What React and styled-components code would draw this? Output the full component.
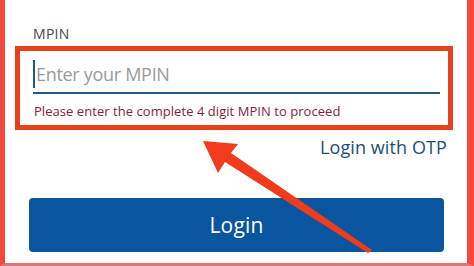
import React from 'react';
import styled, { createGlobalStyle } from 'styled-components';

const GlobalStyle = createGlobalStyle`
  html, body {
    margin: 0;
    padding: 0;
    background: #ffffff;
  }
  body {
    font-family: 'Open Sans', 'Liberation Sans', sans-serif;
  }
`;

const Screen = styled.div`
  position: relative;
  width: 474px;
  height: 266px;
  box-sizing: border-box;
  background: #ffffff;
  border-left: 5px solid #f4483a;
  border-right: 7px solid #f4483a;
  border-bottom: 3px solid #dc7677;
  overflow: hidden;
  display: flex;
  flex-direction: column;
`;

const Label = styled.div`
  margin: 25px 0 0 28px;
  font-size: 14px;
  line-height: 17px;
  color: #474747;
  letter-spacing: 0.3px;
`;

const Highlight = styled.div`
  margin: 4px 14px 0 10px;
  height: 84px;
  box-sizing: border-box;
  border: 5px solid #e9401d;
  padding: 9px 8px 0 13px;
  display: flex;
  flex-direction: column;
`;

const Field = styled.div`
  height: 28px;
  display: flex;
  align-items: center;
  border-bottom: 2px solid #1f5a88;
  padding-bottom: 4px;
`;

const Caret = styled.span`
  width: 2px;
  height: 28px;
  background: #1f5a88;
  margin-right: 1px;
`;

const Placeholder = styled.span`
  font-size: 18px;
  color: #9a9a9a;
  letter-spacing: -0.3px;
`;

const ErrorText = styled.div`
  margin-top: 9px;
  padding-left: 1px;
  font-size: 13px;
  line-height: 16px;
  color: #8a1c3b;
  letter-spacing: 0.05px;
`;

const OtpRow = styled.div`
  display: flex;
  justify-content: flex-end;
  padding-right: 20px;
  margin-top: 6px;
`;

const OtpLink = styled.a`
  font-size: 18px;
  line-height: 22px;
  color: #1b4f78;
  text-decoration: none;
  letter-spacing: 0.1px;
`;

const LoginButton = styled.button`
  margin: 40px 23px 0 24px;
  height: 54px;
  border: none;
  border-radius: 4px;
  background: #0a55a0;
  color: #ffffff;
  font-family: 'Open Sans', 'Liberation Sans', sans-serif;
  font-size: 21px;
  letter-spacing: 0.2px;
  padding: 0;
`;

const Arrow = styled.svg`
  position: absolute;
  left: -5px;
  top: 0;
  pointer-events: none;
`;

export default function App() {
  return (
    <>
      <GlobalStyle />
      <Screen>
        <Label>MPIN</Label>
        <Highlight>
          <Field>
            <Caret />
            <Placeholder>Enter your MPIN</Placeholder>
          </Field>
          <ErrorText>Please enter the complete 4 digit MPIN to proceed</ErrorText>
        </Highlight>
        <OtpRow>
          <OtpLink href="#">Login with OTP</OtpLink>
        </OtpRow>
        <LoginButton>Login</LoginButton>
        <Arrow width="474" height="266" viewBox="0 0 474 266">
          <polygon
            fill="#f03b1c"
            points="203,141 238,144 231,153 372,250 368,253 225,162 218,173"
          />
        </Arrow>
      </Screen>
    </>
  );
}
